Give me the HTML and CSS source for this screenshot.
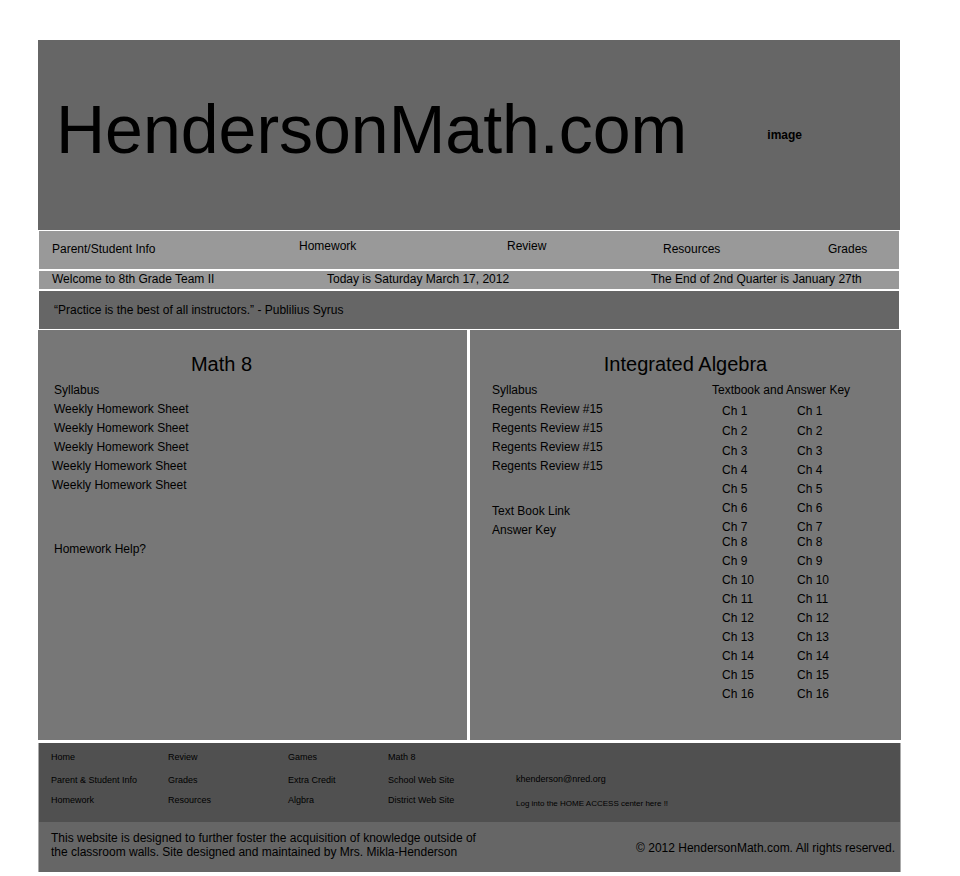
FILE: index.html
```html
<!DOCTYPE html>
<html lang="en">
<head>
<meta charset="utf-8">
<title>HendersonMath.com</title>
<link rel="stylesheet" href="styles.css">
</head>
<body>
<div class="page">
  <header class="banner">
    <h1 class="site-title">HendersonMath.com</h1>
    <div class="banner-image">image</div>
  </header>

  <nav class="bar main-nav">
    <a class="nav-low" href="#info">Parent/Student Info</a>
    <a href="#homework">Homework</a>
    <a href="#review">Review</a>
    <a class="nav-low" href="#resources">Resources</a>
    <a class="nav-low" href="#grades">Grades</a>
  </nav>

  <div class="bar notices">
    <span>Welcome to 8th Grade Team II</span>
    <span>Today is Saturday March 17, 2012</span>
    <span>The End of 2nd Quarter is January 27th</span>
  </div>

  <p class="bar quote">“Practice is the best of all instructors.” - Publilius Syrus</p>

  <main class="courses">
    <section class="course course-math">
      <h2>Math 8</h2>
      <ul>
        <li><a href="#syllabus-8">Syllabus</a></li>
        <li><a href="#hw1">Weekly Homework Sheet</a></li>
        <li><a href="#hw2">Weekly Homework Sheet</a></li>
        <li><a href="#hw3">Weekly Homework Sheet</a></li>
      </ul>
      <ul class="older">
        <li><a href="#hw4">Weekly Homework Sheet</a></li>
        <li><a href="#hw5">Weekly Homework Sheet</a></li>
      </ul>
      <ul class="help">
        <li><a href="#help">Homework Help?</a></li>
      </ul>
    </section>

    <section class="course course-algebra">
      <h2>Integrated Algebra</h2>
      <div class="algebra-columns">
        <div class="algebra-links">
          <ul>
            <li><a href="#syllabus-algebra">Syllabus</a></li>
            <li><a href="#regents1">Regents Review #15</a></li>
            <li><a href="#regents2">Regents Review #15</a></li>
            <li><a href="#regents3">Regents Review #15</a></li>
            <li><a href="#regents4">Regents Review #15</a></li>
          </ul>
          <ul class="books">
            <li><a href="#textbook">Text Book Link</a></li>
            <li><a href="#answers">Answer Key</a></li>
          </ul>
        </div>
        <div class="textbook">
          <h3>Textbook and Answer Key</h3>
          <div class="chapters">
            <div>
              <ul class="roomy">
                <li><a href="#t1">Ch 1</a></li>
                <li><a href="#t2">Ch 2</a></li>
              </ul>
              <ul>
                <li><a href="#t3">Ch 3</a></li>
                <li><a href="#t4">Ch 4</a></li>
                <li><a href="#t5">Ch 5</a></li>
                <li><a href="#t6">Ch 6</a></li>
                <li><a href="#t7">Ch 7</a></li>
              </ul>
              <ul class="second-half">
                <li><a href="#t8">Ch 8</a></li>
                <li><a href="#t9">Ch 9</a></li>
                <li><a href="#t10">Ch 10</a></li>
                <li><a href="#t11">Ch 11</a></li>
                <li><a href="#t12">Ch 12</a></li>
                <li><a href="#t13">Ch 13</a></li>
                <li><a href="#t14">Ch 14</a></li>
                <li><a href="#t15">Ch 15</a></li>
                <li><a href="#t16">Ch 16</a></li>
              </ul>
            </div>
            <div>
              <ul class="roomy">
                <li><a href="#k1">Ch 1</a></li>
                <li><a href="#k2">Ch 2</a></li>
              </ul>
              <ul>
                <li><a href="#k3">Ch 3</a></li>
                <li><a href="#k4">Ch 4</a></li>
                <li><a href="#k5">Ch 5</a></li>
                <li><a href="#k6">Ch 6</a></li>
                <li><a href="#k7">Ch 7</a></li>
              </ul>
              <ul class="second-half">
                <li><a href="#k8">Ch 8</a></li>
                <li><a href="#k9">Ch 9</a></li>
                <li><a href="#k10">Ch 10</a></li>
                <li><a href="#k11">Ch 11</a></li>
                <li><a href="#k12">Ch 12</a></li>
                <li><a href="#k13">Ch 13</a></li>
                <li><a href="#k14">Ch 14</a></li>
                <li><a href="#k15">Ch 15</a></li>
                <li><a href="#k16">Ch 16</a></li>
              </ul>
            </div>
          </div>
        </div>
      </div>
    </section>
  </main>

  <footer class="footer">
    <nav class="footer-nav">
      <ul>
        <li><a href="#home">Home</a></li>
        <li><a href="#info">Parent &amp; Student Info</a></li>
        <li><a href="#homework">Homework</a></li>
      </ul>
      <ul>
        <li><a href="#review">Review</a></li>
        <li><a href="#grades">Grades</a></li>
        <li><a href="#resources">Resources</a></li>
      </ul>
      <ul>
        <li><a href="#games">Games</a></li>
        <li><a href="#extra">Extra Credit</a></li>
        <li><a href="#algebra">Algbra</a></li>
      </ul>
      <ul>
        <li><a href="#math8">Math 8</a></li>
        <li><a href="#school">School Web Site</a></li>
        <li><a href="#district">District Web Site</a></li>
      </ul>
      <div class="contact">
        <a href="mailto:khenderson@nred.org">khenderson@nred.org</a>
        <a class="access" href="#access">Log into the HOME ACCESS center here !!</a>
      </div>
    </nav>
    <div class="legal">
      <p>This website is designed to further foster the acquisition of knowledge outside of<br>the classroom walls. Site designed and maintained by Mrs. Mikla-Henderson</p>
      <p class="copyright">© 2012 HendersonMath.com. All rights reserved.</p>
    </div>
  </footer>
</div>
</body>
</html>
```
FILE: styles.css
```css
* {
  box-sizing: border-box;
}

body {
  margin: 0;
  background: #fff;
  color: #000;
  font: 12px/14px "Liberation Sans", Arial, sans-serif;
}

h1, h2, h3, p, ul {
  margin: 0;
  padding: 0;
  font-weight: normal;
}

ul {
  list-style: none;
}

a {
  color: inherit;
  text-decoration: none;
}

.page {
  margin: 40px 59px 0 38px;
}

/* Banner */

.banner {
  display: flex;
  align-items: center;
  justify-content: space-between;
  min-height: 190px;
  margin-right: 1px;
  padding: 0 98px 0 18px;
  background: #666;
}

.site-title {
  padding-bottom: 12px;
  font-size: 68px;
  line-height: 78px;
}

.banner-image {
  font-weight: bold;
}

/* Bars under the banner */

.bar {
  margin: 1px 2px 0 1px;
}

.main-nav {
  display: grid;
  grid-template-columns: 247fr 208fr 156fr 165fr 71fr;
  align-items: start;
  min-height: 38px;
  padding: 8px 0 0 13px;
  background: #999;
}

.nav-low {
  margin-top: 3px;
}

.notices {
  display: grid;
  grid-template-columns: 275fr 324fr 248fr;
  margin-top: 2px;
  padding: 1px 0 3px 13px;
  background: #999;
}

.quote {
  margin-top: 2px;
  padding: 12px 15px;
  background: #666;
}

/* Courses */

.courses {
  display: grid;
  grid-template-columns: 429fr 431fr;
  gap: 3px;
  min-height: 410px;
  margin-top: 1px;
}

.course {
  padding-top: 23px;
  background: #777;
}

.course h2 {
  margin-bottom: 6px;
  font-size: 20px;
  line-height: 22px;
  text-align: center;
}

.course li,
.course h3 {
  font-size: 12px;
  line-height: 19px;
}

.course-math h2 {
  padding-right: 62px;
}

.course-math ul {
  padding-left: 16px;
}

.course-math .older {
  padding-left: 14px;
}

.course-math .help {
  margin-top: 45px;
}

.algebra-columns {
  display: grid;
  grid-template-columns: 220fr 189fr;
  padding-left: 22px;
}

.books {
  margin-top: 26px;
}

.chapters {
  display: grid;
  grid-template-columns: 75px 1fr;
  padding: 2px 0 0 10px;
}

.roomy li {
  padding-bottom: 1px;
}

.second-half {
  margin-top: -4px;
}

/* Footer */

.footer {
  margin-top: 3px;
  border: solid #aaa;
  border-width: 0 1px;
}

.footer-nav {
  display: grid;
  grid-template-columns: 117fr 120fr 100fr 128fr 384fr;
  min-height: 79px;
  padding: 9px 0 0 12px;
  background: #505050;
  font-size: 9px;
  line-height: 10px;
}

.footer-nav li {
  margin-bottom: 10px;
}

.footer-nav li:first-child {
  margin-bottom: 13px;
}

.contact {
  display: flex;
  flex-direction: column;
  gap: 15px;
  padding-top: 22px;
}

.access {
  font-size: 8px;
}

.legal {
  display: flex;
  justify-content: space-between;
  min-height: 50px;
  padding: 9px 5px 0 12px;
  background: #666;
}

.copyright {
  margin-top: 10px;
}
```
